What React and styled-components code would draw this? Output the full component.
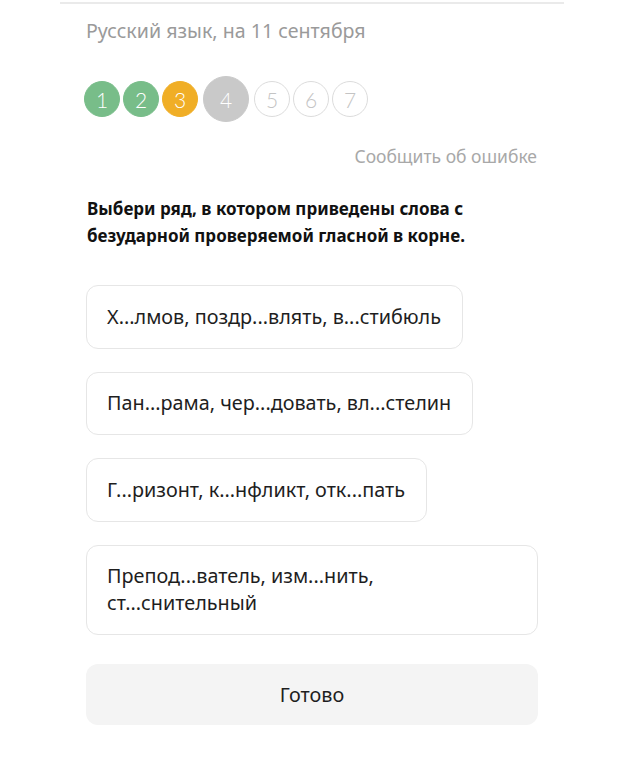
import React from 'react';
import styled, { createGlobalStyle } from 'styled-components';

const GlobalStyle = createGlobalStyle`
    html, body {
        margin: 0;
        padding: 0;
        background: #FFFFFF;
    }
    body {
        font-family: "Noto Sans", "Open Sans", sans-serif;
        color: #1E1E1E;
    }
`
const Page = styled.div`
    width: 504px;
    margin: 2px 0 0 60px;
    border-top: 2px solid #EAEAEA;
    padding: 0 26px 30px;
    box-sizing: border-box;
`
const Subject = styled.div`
    margin-top: 14px;
    font-size: 19.6px;
    line-height: 26px;
    color: #9A9A9A;
`
const Steps = styled.div`
    display: flex;
    align-items: center;
    gap: 3px;
    margin-top: 32px;
    margin-left: -2px;
`
const palette = {
    done: { bg: '#78BD89', border: '#78BD89', color: '#FFFFFF' },
    wrong: { bg: '#F0AE26', border: '#F0AE26', color: '#FFFFFF' },
    current: { bg: '#C9C9C9', border: '#C9C9C9', color: '#FFFFFF' },
    todo: { bg: '#FFFFFF', border: '#DCDCDC', color: '#C4C4C4' },
}
const Step = styled.div`
    width: ${p => p.$big ? 46 : 36}px;
    height: ${p => p.$big ? 46 : 36}px;
    box-sizing: border-box;
    border-radius: 50%;
    border: 1px solid ${p => palette[p.$state].border};
    background: ${p => palette[p.$state].bg};
    color: ${p => palette[p.$state].color};
    display: flex;
    align-items: center;
    justify-content: center;
    font-family: Lato, "Liberation Sans", sans-serif;
    font-weight: 300;
    font-size: 21px;
    ${p => p.$big && 'margin: 0 2px;'}
`
const Report = styled.div`
    text-align: right;
    margin-top: 22px;
    font-size: 17.5px;
    line-height: 24px;
    color: #A8A8A8;
    margin-right: 1px;
`
const Question = styled.div`
    margin-top: 27px;
    font-size: 17px;
    font-weight: 700;
    line-height: 27px;
    color: #111111;
    padding-left: 1px;
`
const Options = styled.div`
    display: flex;
    flex-direction: column;
    align-items: flex-start;
    gap: 23px;
    margin-top: 36px;
`
const Option = styled.div`
    box-sizing: border-box;
    max-width: 100%;
    padding: 17.5px 21px 17.5px 20px;
    border: 1px solid #E6E6E6;
    border-radius: 12px;
    font-size: 19.8px;
    line-height: 26.5px;
    color: #1E1E1E;
`
const Done = styled.button`
    display: block;
    width: 100%;
    height: 61px;
    margin-top: 29px;
    border: none;
    border-radius: 12px;
    background: #F4F4F4;
    font-family: "Noto Sans", "Open Sans", sans-serif;
    font-size: 19.8px;
    color: #1E1E1E;
`

const steps = [
    { n: 1, state: 'done' },
    { n: 2, state: 'done' },
    { n: 3, state: 'wrong' },
    { n: 4, state: 'current', big: true },
    { n: 5, state: 'todo' },
    { n: 6, state: 'todo' },
    { n: 7, state: 'todo' },
]

const answers = [
    'Х...лмов, поздр...влять, в...стибюль',
    'Пан...рама, чер...довать, вл...стелин',
    'Г...ризонт, к...нфликт, отк...пать',
    'Препод...ватель, изм...нить, ст...снительный',
]

export default function App() {
    return (
        <>
            <GlobalStyle />
            <Page>
                <Subject>Русский язык, на 11 сентября</Subject>
                <Steps>
                    {steps.map(s => (
                        <Step key={s.n} $state={s.state} $big={s.big}>{s.n}</Step>
                    ))}
                </Steps>
                <Report>Сообщить об ошибке</Report>
                <Question>
                    Выбери ряд, в котором приведены слова с<br />
                    безударной проверяемой гласной в корне.
                </Question>
                <Options>
                    {answers.map(a => <Option key={a}>{a}</Option>)}
                </Options>
                <Done>Готово</Done>
            </Page>
        </>
    )
}
